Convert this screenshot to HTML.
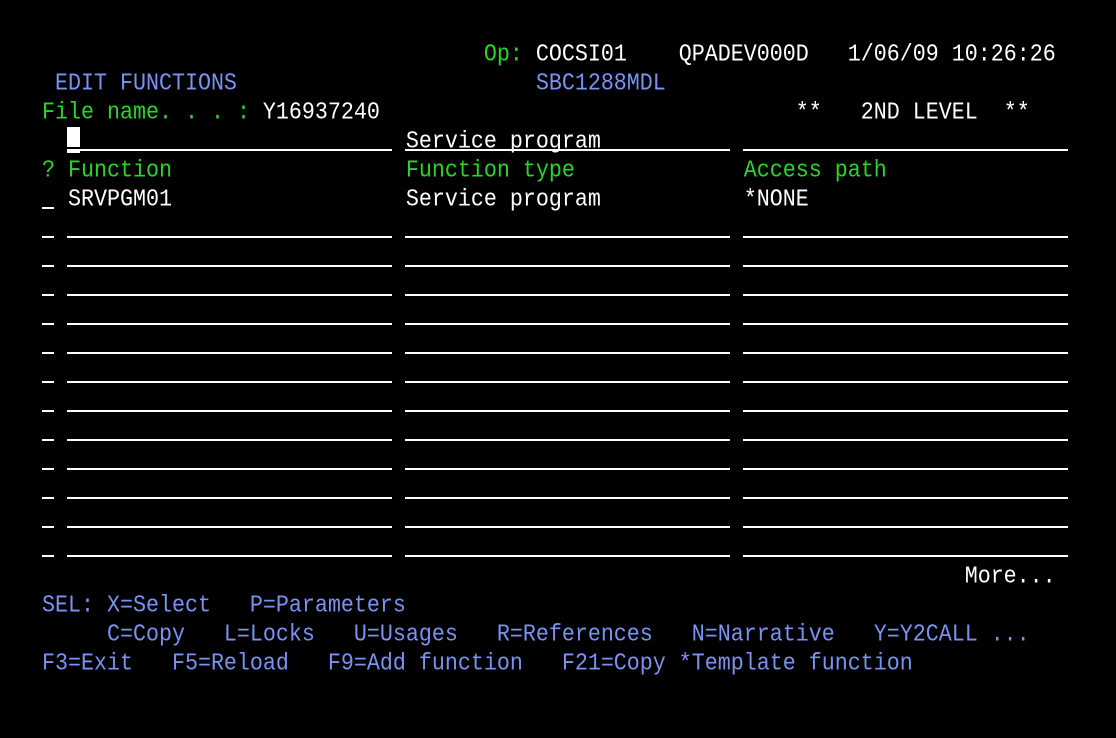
<!DOCTYPE html>
<html><head><meta charset="utf-8"><style>
body{margin:0;background:#000;width:1116px;height:738px;overflow:hidden;position:relative}
.l{position:absolute;left:16px;height:29px;line-height:29px;white-space:pre;font-family:"Liberation Mono",monospace;font-size:21.67px;color:#fff;transform:scaleY(1.1);transform-origin:0 50%}
.g{color:#2ad42a}.b{color:#7a92f0}
.u{position:absolute;height:2px;background:#fff}
.f{width:325px}
.s{width:12px;left:42px}
</style></head><body>
<div class="l" style="top:40px">                                    <span class="g">Op:</span> COCSI01    QPADEV000D   1/06/09 10:26:26</div>
<div class="l b" style="top:69px">   EDIT FUNCTIONS                       SBC1288MDL</div>
<div class="l" style="top:98px">  <span class="g">File name. . . :</span> Y16937240                                **   2ND LEVEL  **</div>
<div class="l" style="top:127px">                              Service program</div>
<div class="l g" style="top:156px">  ? Function                  Function type             Access path</div>
<div class="l" style="top:185px">    SRVPGM01                  Service program           *NONE</div>
<div class="l" style="top:562px">                                                                         More...</div>
<div class="l b" style="top:591px">  SEL: X=Select   P=Parameters</div>
<div class="l b" style="top:620px">       C=Copy   L=Locks   U=Usages   R=References   N=Narrative   Y=Y2CALL ...</div>
<div class="l b" style="top:649px">  F3=Exit   F5=Reload   F9=Add function   F21=Copy *Template function</div>
<div style="position:absolute;left:67px;top:127px;width:13px;height:20px;background:#fff"></div>
<div class="u" style="left:67px;top:150px;width:13px;height:3px"></div>
<div class="u f" style="left:67px;top:149px"></div><div class="u f" style="left:405px;top:149px"></div><div class="u f" style="left:743px;top:149px"></div>
<div class="u s" style="top:207px"></div>
<div class="u s" style="top:236px"></div><div class="u f" style="left:67px;top:236px"></div><div class="u f" style="left:405px;top:236px"></div><div class="u f" style="left:743px;top:236px"></div>
<div class="u s" style="top:265px"></div><div class="u f" style="left:67px;top:265px"></div><div class="u f" style="left:405px;top:265px"></div><div class="u f" style="left:743px;top:265px"></div>
<div class="u s" style="top:294px"></div><div class="u f" style="left:67px;top:294px"></div><div class="u f" style="left:405px;top:294px"></div><div class="u f" style="left:743px;top:294px"></div>
<div class="u s" style="top:323px"></div><div class="u f" style="left:67px;top:323px"></div><div class="u f" style="left:405px;top:323px"></div><div class="u f" style="left:743px;top:323px"></div>
<div class="u s" style="top:352px"></div><div class="u f" style="left:67px;top:352px"></div><div class="u f" style="left:405px;top:352px"></div><div class="u f" style="left:743px;top:352px"></div>
<div class="u s" style="top:381px"></div><div class="u f" style="left:67px;top:381px"></div><div class="u f" style="left:405px;top:381px"></div><div class="u f" style="left:743px;top:381px"></div>
<div class="u s" style="top:410px"></div><div class="u f" style="left:67px;top:410px"></div><div class="u f" style="left:405px;top:410px"></div><div class="u f" style="left:743px;top:410px"></div>
<div class="u s" style="top:439px"></div><div class="u f" style="left:67px;top:439px"></div><div class="u f" style="left:405px;top:439px"></div><div class="u f" style="left:743px;top:439px"></div>
<div class="u s" style="top:468px"></div><div class="u f" style="left:67px;top:468px"></div><div class="u f" style="left:405px;top:468px"></div><div class="u f" style="left:743px;top:468px"></div>
<div class="u s" style="top:497px"></div><div class="u f" style="left:67px;top:497px"></div><div class="u f" style="left:405px;top:497px"></div><div class="u f" style="left:743px;top:497px"></div>
<div class="u s" style="top:526px"></div><div class="u f" style="left:67px;top:526px"></div><div class="u f" style="left:405px;top:526px"></div><div class="u f" style="left:743px;top:526px"></div>
<div class="u s" style="top:555px"></div><div class="u f" style="left:67px;top:555px"></div><div class="u f" style="left:405px;top:555px"></div><div class="u f" style="left:743px;top:555px"></div>
</body></html>
